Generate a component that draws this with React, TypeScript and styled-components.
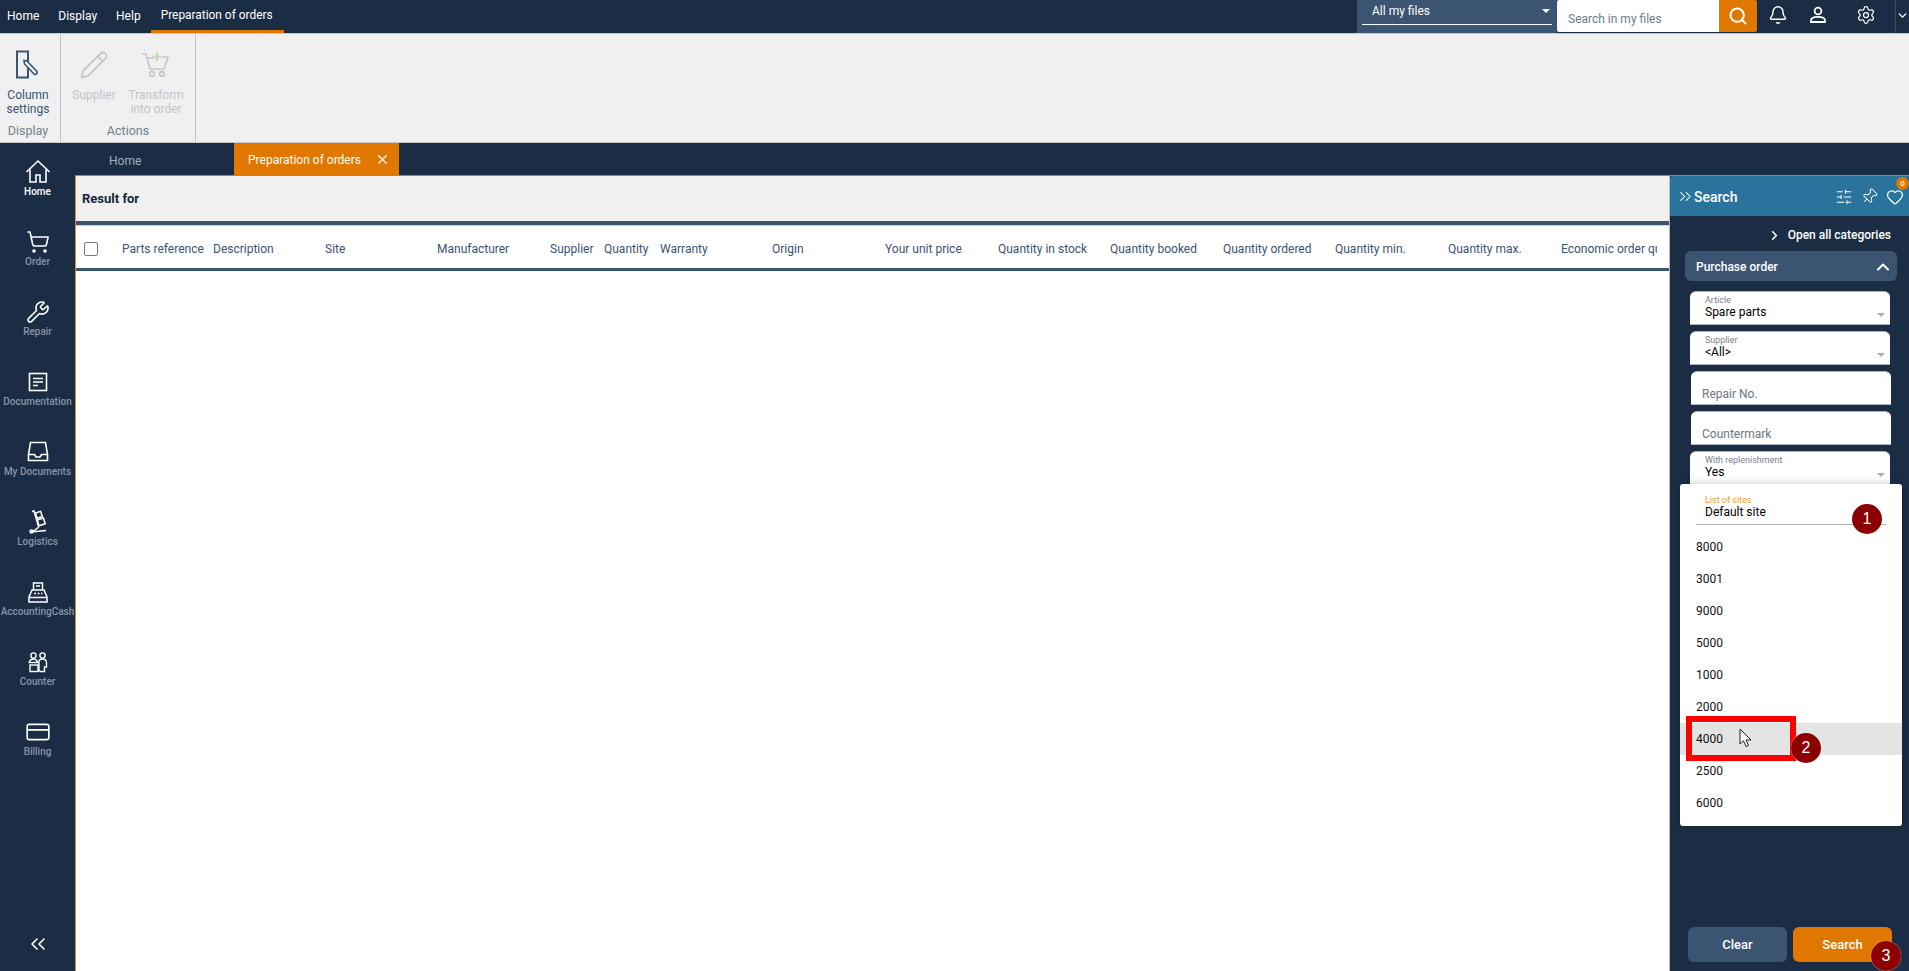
import React from "react";
import styled, { createGlobalStyle } from "styled-components";
import {
  ChevronDown, ChevronUp, ChevronsLeft, ChevronsRight, ChevronRight, CreditCard, Heart, Bell,
  Pencil, Pin, Search, Settings, ShoppingCart, SlidersHorizontal, Wrench, X,
} from "lucide-react";

const NAVY = "#1b2d45";
const STEEL = "#3a5472";
const ORANGE = "#e07800";

const Global = createGlobalStyle`
  html, body { margin: 0; padding: 0; height: 100%; overflow: hidden; }
  body { font-family: "Roboto", "Liberation Sans", sans-serif; font-size: 12px; color: #000; background: ${NAVY}; }
  * { box-sizing: border-box; }
`;

const Root = styled.div`
  width: 1909px; height: 971px; display: flex; flex-direction: column; overflow: hidden;
`;

/* Top bar */
const TopBar = styled.header`
  height: 33px; flex: none; display: flex; align-items: stretch; background: ${NAVY}; color: #fff;
`;
const Menu = styled.nav`
  display: flex; padding-left: 7px; flex: 1;
`;
const MenuItem = styled.div<{ $active?: boolean }>`
  display: flex; align-items: center; height: 33px; padding-bottom: 1px;
  margin-right: ${(p) => (p.$active ? 0 : "19px")};
  ${(p) => p.$active && `width: 133px; padding-left: 10px; margin-left: -9px; border-bottom: 3px solid ${ORANGE}; padding-bottom: 0; white-space: nowrap; font-size: 11.9px;`}
`;
const ScopeSelect = styled.div`
  width: 200px; background: ${STEEL}; padding: 0 5px; display: flex; flex-direction: column;
`;
const ScopeInner = styled.div`
  height: 25px; border-bottom: 1px solid #fff; display: flex; align-items: center; justify-content: space-between;
  padding: 0 2px 3px 10px; color: #fff;
`;
const Caret = styled.span<{ $c?: string }>`
  width: 0; height: 0; border-left: 4px solid transparent; border-right: 4px solid transparent;
  border-top: 4px solid ${(p) => p.$c || "#fff"}; display: block;
`;
const SearchBox = styled.div`
  width: 162px; height: 32px; background: #fff; color: #6f7b8a; display: flex; align-items: center; padding: 5px 0 0 11px;
  border-radius: 2px 0 0 2px;
`;
const SearchBtn = styled.div`
  width: 38px; height: 32px; background: ${ORANGE}; display: flex; align-items: center; justify-content: center;
  border-radius: 0 2px 2px 0;
`;
const TopIcon = styled.div<{ $w: number }>`
  width: ${(p) => p.$w}px; display: flex; align-items: center; justify-content: center; padding-bottom: 3px;
`;
const TopCaret = styled.div`
  width: 14px; border-left: 1px solid #3f4d60; display: flex; align-items: center; justify-content: center; padding-bottom: 3px;
`;

/* Ribbon */
const Ribbon = styled.section`
  height: 110px; flex: none; display: flex; background: #f0f0f0; border-top: 1px solid #c8c8c8; border-bottom: 1px solid #c8c8c8;
`;
const RibbonGroup = styled.div<{ $w: number; $inset?: number }>`
  width: ${(p) => p.$w}px; border-right: 1px solid #c4c4c4; display: flex; flex-direction: column; align-items: center;
  padding-right: ${(p) => p.$inset || 0}px;
`;
const RibbonBtns = styled.div`
  display: flex; flex: 1; gap: 6px; justify-content: center;
`;
const RibbonBtn = styled.div<{ $off?: boolean; $w: number }>`
  width: ${(p) => p.$w}px; display: flex; flex-direction: column; align-items: center; text-align: center;
  padding-top: 16px; line-height: 14px; color: ${(p) => (p.$off ? "#c1c6cc" : STEEL)};
  svg { height: 30px; margin-bottom: 8px; flex: none; }
`;
const GroupName = styled.div`
  height: 19px; color: #76808c; display: flex; align-items: flex-start; font-size: 12.5px; line-height: 16px;
`;

/* Body */
const Body = styled.div`
  flex: 1; min-height: 0; display: flex;
`;
const Sidebar = styled.aside`
  width: 75px; flex: none; background: ${NAVY}; display: flex; flex-direction: column; padding-top: 16px;
`;
const NavItem = styled.div<{ $active?: boolean }>`
  height: 70px; display: flex; flex-direction: column; align-items: center; color: ${(p) => (p.$active ? "#fff" : "#8794a6")};
  font-size: 10px; font-weight: 500; white-space: nowrap;
  svg { color: #fff; height: 26px; flex: none; }
  span { line-height: 13px; }
`;
const Collapse = styled.div`
  margin-top: auto; height: 39px; display: flex; justify-content: center; color: #fff;
`;
const Work = styled.div`
  flex: 1; min-width: 0; display: flex; flex-direction: column;
`;
const Tabs = styled.div`
  height: 32px; flex: none; display: flex; background: ${NAVY};
`;
const TabHome = styled.div`
  width: 159px; padding: 3px 0 0 34px; display: flex; align-items: center; color: #a4adb9;
`;
const TabActive = styled.div`
  width: 165px; background: ${ORANGE}; color: #fff; display: flex; align-items: center; justify-content: space-between;
  padding: 1px 9px 0 14px;
`;
const Content = styled.div`
  flex: 1; min-height: 0; display: flex; border-top: 1px solid ${ORANGE};
`;
const Main = styled.main`
  flex: 1; min-width: 0; background: #fff; border-left: 1px solid #d98a2b; display: flex; flex-direction: column; overflow: hidden;
`;
const ResultBar = styled.div`
  height: 49px; flex: none; background: #f0f0f0; border-bottom: 4px solid ${STEEL}; display: flex; align-items: center;
  padding: 0 0 0 6px; font-size: 13px; font-weight: 700; color: #15263d;
`;
const HeaderRow = styled.div`
  height: 46px; flex: none; border-top: 1px solid #d0d0d0; border-bottom: 3px solid ${STEEL}; display: grid; align-items: center;
  padding-top: 3px;
  grid-template-columns: 46px 91px 112px 112px 113px 54px 56px 112px 113px 113px 112px 113px 112px 113px 113px 96px;
  color: ${STEEL}; white-space: nowrap;
`;
const HeadCell = styled.div`
  overflow: hidden;
`;
const Check = styled.div`
  width: 14px; height: 14px; margin-left: 8px; border: 1.5px solid #7b7b7b; border-radius: 2px; background: #fff;
`;

/* Panel */
const Panel = styled.aside`
  width: 240px; flex: none; background: ${NAVY}; position: relative; display: flex; flex-direction: column; border-left: 1px solid #b9bdc2;
`;
const PanelHead = styled.div`
  height: 40px; flex: none; background: #2a739c; color: #fff; display: flex; align-items: center; padding: 1px 5px 0 6px;
  font-size: 14px; font-weight: 500; border-top-left-radius: 3px;
`;
const PanelTitle = styled.div`
  margin-left: -1px; flex: 1;
`;
const PanelIcons = styled.div`
  display: flex; align-items: center; gap: 8px; position: relative; margin-right: 0;
`;
const TiltedPin = styled(Pin)`
  transform: rotate(45deg);
`;
const Badge = styled.span`
  position: absolute; right: -5px; top: -11px; width: 13px; height: 13px; border-radius: 50%; background: ${ORANGE};
  color: #fff; font-size: 8px; display: flex; align-items: center; justify-content: center;
`;
const OpenAll = styled.div`
  height: 35px; flex: none; display: flex; align-items: center; justify-content: flex-end; gap: 6px; padding: 3px 18px 0 0;
  color: #fff; font-weight: 500;
`;
const Accordion = styled.div`
  height: 30px; flex: none; margin: 0 12px 0 15px; background: ${STEEL}; border-radius: 6px; color: #fff; font-weight: 500;
  display: flex; align-items: center; justify-content: space-between; padding: 1px 4px 0 11px;
`;
const Fields = styled.div`
  margin-top: 10px; padding-left: 20px; display: flex; flex-direction: column; gap: 6px;
`;
const Field = styled.div<{ $shift?: boolean }>`
  width: 200px; height: 34px; flex: none; background: #fff; border-radius: 6px 6px 0 0; border-bottom: 1px solid #aeb4bb;
  border-top: 1px solid #aeb4bb; position: relative; margin-left: ${(p) => (p.$shift ? "1px" : 0)};
  padding: 3px 0 0 15px;
`;
const FieldLabel = styled.div<{ $c?: string }>`
  font-size: 9px; line-height: 11px; color: ${(p) => p.$c || "#7b8088"};
`;
const FieldValue = styled.div`
  font-size: 12px; line-height: 13px; color: #000;
`;
const FieldArrow = styled.div`
  position: absolute; right: 5px; bottom: 7px;
`;
const Placeholder = styled.div`
  margin: 11px 0 0 -4px; color: #6f7680; line-height: 16px;
`;
const Dropdown = styled.div`
  position: absolute; left: 10px; top: 308px; width: 222px; height: 342px; background: #fff; border-radius: 3px;
  box-shadow: 0 0 8px rgba(0,0,0,.25);
`;
const DropField = styled.div`
  height: 41px; margin: 0 16px; padding: 11px 0 0 9px; border-bottom: 1px solid #a9afb6;
`;
const DropList = styled.div`
  padding-top: 6px;
`;
const DropItem = styled.div<{ $hover?: boolean }>`
  height: 32px; padding-left: 16px; display: flex; align-items: center; color: #111; background: ${(p) => (p.$hover ? "#e4e4e4" : "transparent")};
`;
const Footer = styled.div`
  margin-top: auto; display: flex; gap: 6px; padding: 0 0 9px 18px;
`;
const Btn = styled.div<{ $bg: string }>`
  width: 99px; height: 35px; background: ${(p) => p.$bg}; border-radius: 6px; color: #fff; font-size: 13px; font-weight: 500;
  display: flex; align-items: center; justify-content: center;
`;
const Callout = styled.div<{ $x: number; $y: number }>`
  position: absolute; left: ${(p) => p.$x - 15}px; top: ${(p) => p.$y - 15}px; width: 30px; height: 30px; border-radius: 50%;
  background: #8b0000; color: #fff; font-family: "Liberation Sans", sans-serif; font-size: 16px;
  display: flex; align-items: center; justify-content: center; box-shadow: 0 0 1px #fff;
`;
const RedBox = styled.div`
  position: absolute; left: 16px; top: 540px; width: 110px; height: 45px; border: 6px solid #ff0000;
`;
const Cursor = styled.svg`
  position: absolute; left: 69px; top: 552px;
`;

const ColumnIcon = () => (
  <svg width="26" height="30" viewBox="0 0 26 30" fill="none">
    <rect x="2" y="1.5" width="11" height="26" stroke="#3a5472" strokeWidth="2" />
    <path d="M12 11l10 10.5a2 2 0 0 1-3 2.500L9.500 14 9 10.500z" fill="#f0f0f0" stroke="#3a5472" strokeWidth="1.6" />
  </svg>
);
const CartPlus = () => (
  <svg width="30" height="30" viewBox="0 0 30 30" fill="none" stroke="#c1c6cc" strokeWidth="1.6">
    <path d="M1 4h4l4 15h14l4-12h-6M7 8h6" />
    <circle cx="11" cy="24" r="2.400" />
    <circle cx="21" cy="24" r="2.400" />
    <path d="M16 2v9M11.500 6.500h9" stroke="#c3dcb4" strokeWidth="2" />
  </svg>
);
const HomeIcon = () => (
  <svg width="26" height="26" viewBox="0 0 26 26" fill="none" stroke="#fff" strokeWidth="1.6">
    <path d="M1.500 13L13 2l11.500 11" />
    <path d="M5 10.500V23h6v-7h4v7h6V10.500" />
  </svg>
);
const DocIcon = () => (
  <svg width="22" height="26" viewBox="0 0 22 26" fill="none" stroke="#fff" strokeWidth="1.6">
    <rect x="2.500" y="4.500" width="17" height="17" />
    <path d="M6 9.500h10M6 13h10M6 16.500h5" />
  </svg>
);
const TrayIcon = () => (
  <svg width="22" height="26" viewBox="0 0 22 26" fill="none" stroke="#fff" strokeWidth="1.600">
    <path d="M3.500 3.500h15l2 12v6h-19v-6z" />
    <path d="M1.500 15.500h6l1.500 2.500h4l1.500-2.500h6" />
  </svg>
);
const UserIcon = () => (
  <svg width="20" height="20" viewBox="0 0 20 20" fill="none" stroke="#fff" strokeWidth="1.8">
    <circle cx="10" cy="6" r="3.400" />
    <path d="M3 17v-1.500C3 13 6 11.800 10 11.800s7 1.200 7 3.700V17z" />
  </svg>
);
const Logistics = () => (
  <svg width="22" height="26" viewBox="0 0 22 26" fill="none" stroke="#fff" strokeWidth="1.500">
    <path d="M5 2.500l2-.5 4.500 15.500M4 23l15-1.500M6.500 22l5.500-4" />
    <rect x="9" y="3" width="5.500" height="5.500" transform="rotate(-18 12 5.500)" />
    <rect x="11" y="10" width="6.500" height="6" transform="rotate(-18 14 13)" />
    <circle cx="4.500" cy="22.500" r="1.500" />
  </svg>
);
const Register = () => (
  <svg width="22" height="26" viewBox="0 0 22 26" fill="none" stroke="#fff" strokeWidth="1.500">
    <path d="M6.500 11V4h9v7" />
    <path d="M9 7h4" />
    <path d="M5 11h12l3 7v5H2v-5z" />
    <path d="M2 18.500h18M7 14.500h2M10.500 14.500h2M14 14.500h1.500" />
  </svg>
);
const Counter = () => (
  <svg width="20" height="26" viewBox="0 0 20 26" fill="none" stroke="#fff" strokeWidth="1.400">
    <circle cx="5.500" cy="6.500" r="2.600" />
    <circle cx="14.500" cy="6.500" r="2.600" />
    <path d="M1.500 14c0-3 1.500-4 4-4s3.500 1 4 3M11 22.500V13c0-2 1.500-3 3.500-3s4 1 4 4v4h-2v4.500h-5" />
    <rect x="2" y="16" width="8" height="6.500" />
    <path d="M.500 13.500h10" />
  </svg>
);

const columns = ["Parts reference", "Description", "Site", "Manufacturer", "Supplier", "Quantity", "Warranty", "Origin", "Your unit price", "Quantity in stock", "Quantity booked", "Quantity ordered", "Quantity min.", "Quantity max.", "Economic order quantity"];
const sites = ["8000", "3001", "9000", "5000", "1000", "2000", "4000", "2500", "6000"];

export default function App() {
  return (
    <Root>
      <Global />
      <TopBar>
        <Menu>
          <MenuItem>Home</MenuItem>
          <MenuItem>Display</MenuItem>
          <MenuItem>Help</MenuItem>
          <MenuItem $active>Preparation of orders</MenuItem>
        </Menu>
        <ScopeSelect>
          <ScopeInner>All my files<Caret /></ScopeInner>
        </ScopeSelect>
        <SearchBox>Search in my files</SearchBox>
        <SearchBtn><Search size={20} color="#fff" strokeWidth={2.4} /></SearchBtn>
        <TopIcon $w={42}><Bell size={20} color="#fff" strokeWidth={1.7} /></TopIcon>
        <TopIcon $w={38}><UserIcon /></TopIcon>
        <TopIcon $w={58}><Settings size={20} color="#fff" strokeWidth={1.5} /></TopIcon>
        <TopCaret><ChevronDown size={13} color="#fff" strokeWidth={2.5} /></TopCaret>
      </TopBar>

      <Ribbon>
        <RibbonGroup $w={61} $inset={4}>
          <RibbonBtns>
            <RibbonBtn $w={56}><ColumnIcon /><div>Column settings</div></RibbonBtn>
          </RibbonBtns>
          <GroupName>Display</GroupName>
        </RibbonGroup>
        <RibbonGroup $w={135}>
          <RibbonBtns>
            <RibbonBtn $off $w={50}><Pencil size={30} strokeWidth={1.4} /><div>Supplier</div></RibbonBtn>
            <RibbonBtn $off $w={62}><CartPlus /><div>Transform into order</div></RibbonBtn>
          </RibbonBtns>
          <GroupName>Actions</GroupName>
        </RibbonGroup>
      </Ribbon>

      <Body>
        <Sidebar>
          <NavItem $active><HomeIcon /><span>Home</span></NavItem>
          <NavItem><ShoppingCart size={24} strokeWidth={1.6} /><span>Order</span></NavItem>
          <NavItem><Wrench size={24} strokeWidth={1.6} /><span>Repair</span></NavItem>
          <NavItem><DocIcon /><span>Documentation</span></NavItem>
          <NavItem><TrayIcon /><span>My Documents</span></NavItem>
          <NavItem><Logistics /><span>Logistics</span></NavItem>
          <NavItem><Register /><span>AccountingCash</span></NavItem>
          <NavItem><Counter /><span>Counter</span></NavItem>
          <NavItem><CreditCard size={26} strokeWidth={1.5} /><span>Billing</span></NavItem>
          <Collapse><ChevronsLeft size={24} strokeWidth={1.6} /></Collapse>
        </Sidebar>
        <Work>
          <Tabs>
            <TabHome>Home</TabHome>
            <TabActive>Preparation of orders<X size={15} color="#fff" strokeWidth={2} /></TabActive>
          </Tabs>
          <Content>
            <Main>
              <ResultBar>Result for</ResultBar>
              <HeaderRow>
                <HeadCell><Check /></HeadCell>
                {columns.map((c) => <HeadCell key={c}>{c}</HeadCell>)}
              </HeaderRow>
            </Main>
            <Panel>
              <PanelHead>
                <ChevronsRight size={19} strokeWidth={1.3} />
                <PanelTitle>Search</PanelTitle>
                <PanelIcons>
                  <SlidersHorizontal size={18} strokeWidth={1.4} />
                  <TiltedPin size={17} strokeWidth={1.4} />
                  <Heart size={18} strokeWidth={1.7} />
                  <Badge>0</Badge>
                </PanelIcons>
              </PanelHead>
              <OpenAll><ChevronRight size={15} strokeWidth={2.6} />Open all categories</OpenAll>
              <Accordion>Purchase order<ChevronUp size={20} strokeWidth={2.4} /></Accordion>
              <Fields>
                <Field>
                  <FieldLabel>Article</FieldLabel>
                  <FieldValue>Spare parts</FieldValue>
                  <FieldArrow><Caret $c="#a8b0ba" /></FieldArrow>
                </Field>
                <Field>
                  <FieldLabel>Supplier</FieldLabel>
                  <FieldValue>&lt;All&gt;</FieldValue>
                  <FieldArrow><Caret $c="#a8b0ba" /></FieldArrow>
                </Field>
                <Field $shift><Placeholder>Repair No.</Placeholder></Field>
                <Field $shift><Placeholder>Countermark</Placeholder></Field>
                <Field>
                  <FieldLabel>With replenishment</FieldLabel>
                  <FieldValue>Yes</FieldValue>
                  <FieldArrow><Caret $c="#a8b0ba" /></FieldArrow>
                </Field>
              </Fields>
              <Dropdown>
                <DropField>
                  <FieldLabel $c="#f39a2e">List of sites</FieldLabel>
                  <FieldValue>Default site</FieldValue>
                </DropField>
                <DropList>
                  {sites.map((s) => <DropItem key={s} $hover={s === "4000"}>{s}</DropItem>)}
                </DropList>
              </Dropdown>
              <Footer>
                <Btn $bg={STEEL}>Clear</Btn>
                <Btn $bg={ORANGE}>Search</Btn>
              </Footer>
              <RedBox />
              <Cursor width="13" height="20" viewBox="0 0 13 20">
                <path d="M1 1v15l3.500-3.200 2.500 5.700 2.500-1-2.500-5.500h5z" fill="#fff" stroke="#222" strokeWidth="1" />
              </Cursor>
              <Callout $x={197} $y={343}>1</Callout>
              <Callout $x={136} $y={572}>2</Callout>
              <Callout $x={216} $y={780}>3</Callout>
            </Panel>
          </Content>
        </Work>
      </Body>
    </Root>
  );
}
